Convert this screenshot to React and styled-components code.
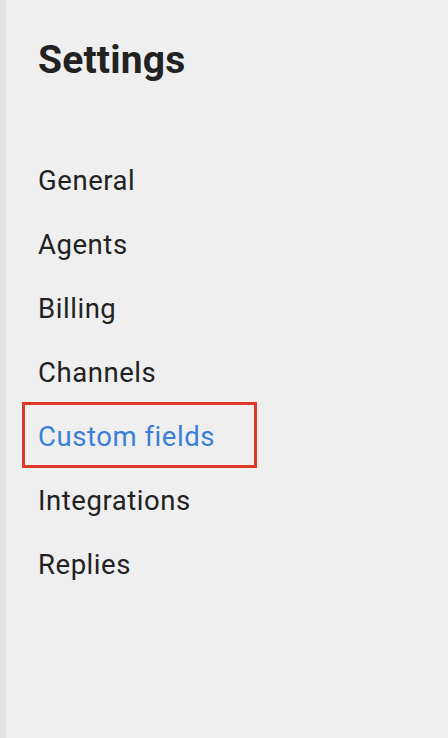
import React from 'react'
import styled, { createGlobalStyle } from 'styled-components'

const GlobalStyle = createGlobalStyle`
  html, body {
    margin: 0;
    padding: 0;
    background: #efefef;
  }
  body {
    font-family: Roboto, "Liberation Sans", sans-serif;
    color: #212121;
  }
`

const items = [
  { label: 'General' },
  { label: 'Agents' },
  { label: 'Billing' },
  { label: 'Channels' },
  { label: 'Custom fields', active: true },
  { label: 'Integrations' },
  { label: 'Replies' },
]

function App() {
  return (
    <>
      <GlobalStyle />
      <Page>
        <Edge />
        <Sidebar>
          <Title>Settings</Title>
          <Nav>
            {items.map((item) => (
              <NavItem key={item.label} $active={item.active}>
                {item.label}
              </NavItem>
            ))}
          </Nav>
        </Sidebar>
      </Page>
    </>
  )
}

export default App

//styled-component
const Page = styled.div`
  width: 448px;
  height: 738px;
  display: flex;
  background: #efefef;
  overflow: hidden;
`

const Edge = styled.div`
  width: 7px;
  flex-shrink: 0;
  background: linear-gradient(to right, #e3e3e3 0%, #e3e3e3 70%, #ececec 100%);
`

const Sidebar = styled.div`
  flex: 1;
  padding: 37px 0 0 31px;
  display: flex;
  flex-direction: column;
`

const Title = styled.h1`
  margin: 0;
  font-size: 39px;
  font-weight: 700;
  line-height: 46px;
  letter-spacing: 0.2px;
  color: #222;
`

const Nav = styled.nav`
  display: flex;
  flex-direction: column;
  margin-top: 64px;
  margin-left: -16px;
`

const NavItem = styled.a`
  display: block;
  width: 235px;
  box-sizing: border-box;
  height: ${(p) => (p.$active ? '66px' : '64px')};
  margin: ${(p) => (p.$active ? '-1px 0' : '0')};
  padding: ${(p) => (p.$active ? '5px' : '4px')} 0 0 13px;
  line-height: 54px;
  font-size: 27.5px;
  letter-spacing: 0.55px;
  color: ${(p) => (p.$active ? '#3b7fd9' : '#222')};
  border: 3px solid ${(p) => (p.$active ? '#dc3a27' : 'transparent')};
  cursor: pointer;
`
